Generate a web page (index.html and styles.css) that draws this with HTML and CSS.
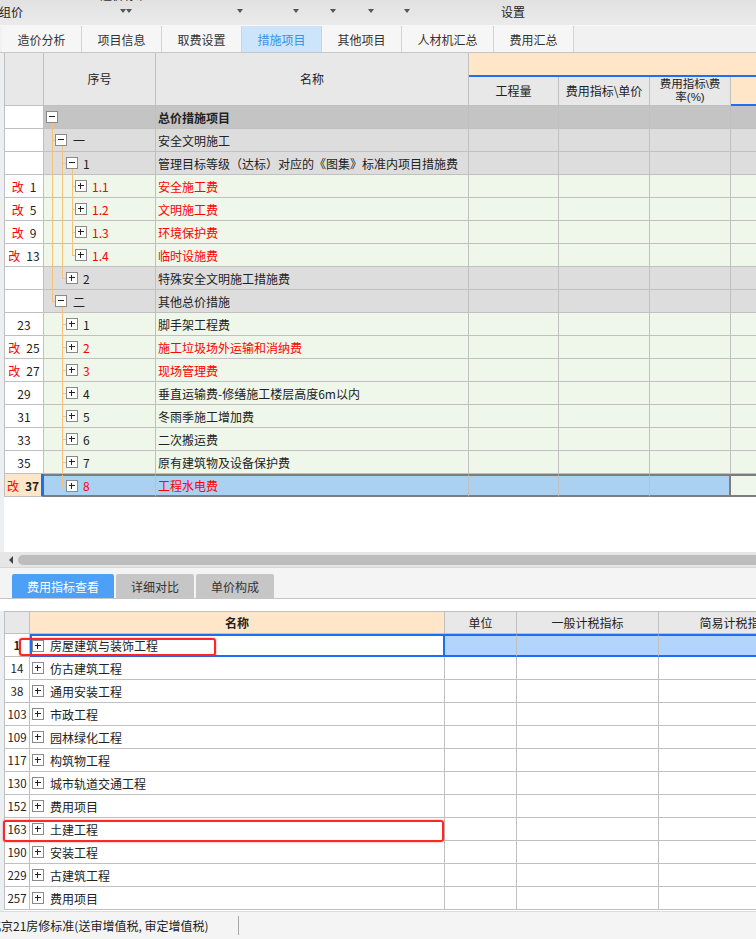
FILE: index.html
```html
<!DOCTYPE html>
<html lang="zh-CN">
<head>
<meta charset="utf-8">
<title>措施项目</title>
<link rel="stylesheet" href="styles.css">
</head>
<body>
<svg class="defs" width="0" height="0" aria-hidden="true">
  <symbol id="minus" viewBox="0 0 12 12"><rect x="0.5" y="0.5" width="11" height="11" fill="#fff" stroke="#8a8a8a"/><path d="M3 5.5h6" stroke="#222"/></symbol>
  <symbol id="plus" viewBox="0 0 12 12"><rect x="0.5" y="0.5" width="11" height="11" fill="#fff" stroke="#8a8a8a"/><path d="M3 5.5h6M5.5 3v6" stroke="#222"/></symbol>
</svg>

<div class="topbar">
  <div class="cutline"><span>造价标准</span></div>
  <div class="combos">
    <div class="combo w1"><span class="tb-text">组价</span><i class="dd"></i></div>
    <div class="combo w2"><i class="dd"></i></div>
    <div class="combo w3"><i class="dd"></i></div>
    <div class="combo w4"><i class="dd"></i></div>
    <div class="combo w5"><i class="dd"></i></div>
    <div class="combo w6"><i class="dd"></i></div>
    <div class="combo w7"><i class="dd"></i></div>
    <span class="tb-text setting">设置</span>
  </div>
</div>

<div class="tabs">
  <div class="tab">造价分析</div>
  <div class="tab">项目信息</div>
  <div class="tab">取费设置</div>
  <div class="tab active">措施项目</div>
  <div class="tab">其他项目</div>
  <div class="tab wide">人材机汇总</div>
  <div class="tab">费用汇总</div>
</div>

<div class="main">
  <div class="grid">
    <div class="ghead">
      <div class="hc h-rn"></div>
      <div class="hc h-xh">序号</div>
      <div class="hc h-mc">名称</div>
      <div class="hc h-band"></div>
      <div class="hc h-sub">工程量</div>
      <div class="hc h-sub">费用指标\单价</div>
      <div class="hc h-sub two"><span class="hl">费用指标\费</span><span class="hl">率(%)</span></div>
      <div class="hc h-last"></div>
    </div>

    <div class="row r-top">
      <div class="c rn"></div>
      <div class="c tree l0"><i class="ln x8 bot"></i><svg class="bx"><use href="#minus"/></svg></div>
      <div class="c nm b">总价措施项目</div>
      <div class="c"></div><div class="c"></div><div class="c"></div><div class="c"></div>
    </div>
    <div class="row r-gray">
      <div class="c rn"></div>
      <div class="c tree l1"><i class="ln x8 full"></i><i class="hz h8"></i><i class="ln x18 bot"></i><svg class="bx"><use href="#minus"/></svg><span>一</span></div>
      <div class="c nm">安全文明施工</div>
      <div class="c"></div><div class="c"></div><div class="c"></div><div class="c"></div>
    </div>
    <div class="row r-gray">
      <div class="c rn"></div>
      <div class="c tree l2"><i class="ln x8 full"></i><i class="ln x18 full"></i><i class="hz h18"></i><i class="ln x28 bot"></i><svg class="bx"><use href="#minus"/></svg><span>1</span></div>
      <div class="c nm">管理目标等级（达标）对应的《图集》标准内项目措施费</div>
      <div class="c"></div><div class="c"></div><div class="c"></div><div class="c"></div>
    </div>
    <div class="row r-green">
      <div class="c rn"><span class="gai">改</span><span>1</span></div>
      <div class="c tree l3"><i class="ln x8 full"></i><i class="ln x18 full"></i><i class="ln x28 full"></i><i class="hz h28"></i><svg class="bx"><use href="#plus"/></svg><span class="red">1.1</span></div>
      <div class="c nm red">安全施工费</div>
      <div class="c"></div><div class="c"></div><div class="c"></div><div class="c"></div>
    </div>
    <div class="row r-green">
      <div class="c rn"><span class="gai">改</span><span>5</span></div>
      <div class="c tree l3"><i class="ln x8 full"></i><i class="ln x18 full"></i><i class="ln x28 full"></i><i class="hz h28"></i><svg class="bx"><use href="#plus"/></svg><span class="red">1.2</span></div>
      <div class="c nm red">文明施工费</div>
      <div class="c"></div><div class="c"></div><div class="c"></div><div class="c"></div>
    </div>
    <div class="row r-green">
      <div class="c rn"><span class="gai">改</span><span>9</span></div>
      <div class="c tree l3"><i class="ln x8 full"></i><i class="ln x18 full"></i><i class="ln x28 full"></i><i class="hz h28"></i><svg class="bx"><use href="#plus"/></svg><span class="red">1.3</span></div>
      <div class="c nm red">环境保护费</div>
      <div class="c"></div><div class="c"></div><div class="c"></div><div class="c"></div>
    </div>
    <div class="row r-green">
      <div class="c rn"><span class="gai">改</span><span>13</span></div>
      <div class="c tree l3"><i class="ln x8 full"></i><i class="ln x18 full"></i><i class="ln x28 top"></i><i class="hz h28"></i><svg class="bx"><use href="#plus"/></svg><span class="red">1.4</span></div>
      <div class="c nm red">临时设施费</div>
      <div class="c"></div><div class="c"></div><div class="c"></div><div class="c"></div>
    </div>
    <div class="row r-gray">
      <div class="c rn"></div>
      <div class="c tree l2"><i class="ln x8 full"></i><i class="ln x18 top"></i><i class="hz h18"></i><svg class="bx"><use href="#plus"/></svg><span>2</span></div>
      <div class="c nm">特殊安全文明施工措施费</div>
      <div class="c"></div><div class="c"></div><div class="c"></div><div class="c"></div>
    </div>
    <div class="row r-gray">
      <div class="c rn"></div>
      <div class="c tree l1"><i class="ln x8 top"></i><i class="hz h8"></i><i class="ln x18 bot"></i><svg class="bx"><use href="#minus"/></svg><span>二</span></div>
      <div class="c nm">其他总价措施</div>
      <div class="c"></div><div class="c"></div><div class="c"></div><div class="c"></div>
    </div>
    <div class="row r-green">
      <div class="c rn"><span>23</span></div>
      <div class="c tree l2"><i class="ln x18 full"></i><i class="hz h18"></i><svg class="bx"><use href="#plus"/></svg><span>1</span></div>
      <div class="c nm">脚手架工程费</div>
      <div class="c"></div><div class="c"></div><div class="c"></div><div class="c"></div>
    </div>
    <div class="row r-green">
      <div class="c rn"><span class="gai">改</span><span>25</span></div>
      <div class="c tree l2"><i class="ln x18 full"></i><i class="hz h18"></i><svg class="bx"><use href="#plus"/></svg><span class="red">2</span></div>
      <div class="c nm red">施工垃圾场外运输和消纳费</div>
      <div class="c"></div><div class="c"></div><div class="c"></div><div class="c"></div>
    </div>
    <div class="row r-green">
      <div class="c rn"><span class="gai">改</span><span>27</span></div>
      <div class="c tree l2"><i class="ln x18 full"></i><i class="hz h18"></i><svg class="bx"><use href="#plus"/></svg><span class="red">3</span></div>
      <div class="c nm red">现场管理费</div>
      <div class="c"></div><div class="c"></div><div class="c"></div><div class="c"></div>
    </div>
    <div class="row r-green">
      <div class="c rn"><span>29</span></div>
      <div class="c tree l2"><i class="ln x18 full"></i><i class="hz h18"></i><svg class="bx"><use href="#plus"/></svg><span>4</span></div>
      <div class="c nm">垂直运输费-修缮施工楼层高度6m以内</div>
      <div class="c"></div><div class="c"></div><div class="c"></div><div class="c"></div>
    </div>
    <div class="row r-green">
      <div class="c rn"><span>31</span></div>
      <div class="c tree l2"><i class="ln x18 full"></i><i class="hz h18"></i><svg class="bx"><use href="#plus"/></svg><span>5</span></div>
      <div class="c nm">冬雨季施工增加费</div>
      <div class="c"></div><div class="c"></div><div class="c"></div><div class="c"></div>
    </div>
    <div class="row r-green">
      <div class="c rn"><span>33</span></div>
      <div class="c tree l2"><i class="ln x18 full"></i><i class="hz h18"></i><svg class="bx"><use href="#plus"/></svg><span>6</span></div>
      <div class="c nm">二次搬运费</div>
      <div class="c"></div><div class="c"></div><div class="c"></div><div class="c"></div>
    </div>
    <div class="row r-green">
      <div class="c rn"><span>35</span></div>
      <div class="c tree l2"><i class="ln x18 full"></i><i class="hz h18"></i><svg class="bx"><use href="#plus"/></svg><span>7</span></div>
      <div class="c nm">原有建筑物及设备保护费</div>
      <div class="c"></div><div class="c"></div><div class="c"></div><div class="c"></div>
    </div>
    <div class="row r-sel">
      <div class="c rn"><span class="gai">改</span><span class="b">37</span></div>
      <div class="c tree l2"><i class="ln x18 top"></i><i class="hz h18"></i><svg class="bx"><use href="#plus"/></svg><span class="red">8</span></div>
      <div class="c nm red">工程水电费</div>
      <div class="c"></div><div class="c"></div><div class="c lastsel"></div><div class="c after"></div>
    </div>
  </div>
  <div class="blank"></div>
  <div class="hscroll"><i class="larrow"></i><div class="thumb"></div></div>
</div>

<div class="subtabs">
  <div class="stab active w-a">费用指标查看</div>
  <div class="stab">详细对比</div>
  <div class="stab">单价构成</div>
</div>

<div class="lower">
  <div class="lgrid">
    <div class="lrow lhead">
      <div class="lc lrn"></div>
      <div class="lc lname b">名称</div>
      <div class="lc">单位</div>
      <div class="lc">一般计税指标</div>
      <div class="lc">简易计税指标</div>
    </div>
    <div class="lrow sel">
      <div class="lc lrn b">1</div>
      <div class="lc lname"><svg class="bx"><use href="#plus"/></svg><span>房屋建筑与装饰工程</span></div>
      <div class="lc"></div><div class="lc"></div><div class="lc"></div>
    </div>
    <div class="lrow"><div class="lc lrn">14</div><div class="lc lname"><svg class="bx"><use href="#plus"/></svg><span>仿古建筑工程</span></div><div class="lc"></div><div class="lc"></div><div class="lc"></div></div>
    <div class="lrow"><div class="lc lrn">38</div><div class="lc lname"><svg class="bx"><use href="#plus"/></svg><span>通用安装工程</span></div><div class="lc"></div><div class="lc"></div><div class="lc"></div></div>
    <div class="lrow"><div class="lc lrn">103</div><div class="lc lname"><svg class="bx"><use href="#plus"/></svg><span>市政工程</span></div><div class="lc"></div><div class="lc"></div><div class="lc"></div></div>
    <div class="lrow"><div class="lc lrn">109</div><div class="lc lname"><svg class="bx"><use href="#plus"/></svg><span>园林绿化工程</span></div><div class="lc"></div><div class="lc"></div><div class="lc"></div></div>
    <div class="lrow"><div class="lc lrn">117</div><div class="lc lname"><svg class="bx"><use href="#plus"/></svg><span>构筑物工程</span></div><div class="lc"></div><div class="lc"></div><div class="lc"></div></div>
    <div class="lrow"><div class="lc lrn">130</div><div class="lc lname"><svg class="bx"><use href="#plus"/></svg><span>城市轨道交通工程</span></div><div class="lc"></div><div class="lc"></div><div class="lc"></div></div>
    <div class="lrow"><div class="lc lrn">152</div><div class="lc lname"><svg class="bx"><use href="#plus"/></svg><span>费用项目</span></div><div class="lc"></div><div class="lc"></div><div class="lc"></div></div>
    <div class="lrow"><div class="lc lrn">163</div><div class="lc lname"><svg class="bx"><use href="#plus"/></svg><span>土建工程</span></div><div class="lc"></div><div class="lc"></div><div class="lc"></div></div>
    <div class="lrow"><div class="lc lrn">190</div><div class="lc lname"><svg class="bx"><use href="#plus"/></svg><span>安装工程</span></div><div class="lc"></div><div class="lc"></div><div class="lc"></div></div>
    <div class="lrow"><div class="lc lrn">229</div><div class="lc lname"><svg class="bx"><use href="#plus"/></svg><span>古建筑工程</span></div><div class="lc"></div><div class="lc"></div><div class="lc"></div></div>
    <div class="lrow"><div class="lc lrn">257</div><div class="lc lname"><svg class="bx"><use href="#plus"/></svg><span>费用项目</span></div><div class="lc"></div><div class="lc"></div><div class="lc"></div></div>
  </div>
  <div class="mark mark1"></div>
  <div class="mark mark2"></div>
</div>

<div class="status">
  <div class="st-text">北京21房修标准(送审增值税, 审定增值税)</div>
</div>
</body>
</html>
```

FILE: styles.css
```css
* { box-sizing: border-box; }
html, body { margin: 0; padding: 0; }
body {
  width: 756px;
  height: 939px;
  overflow: hidden;
  background: #fff;
  font-family: "Noto Sans CJK SC", "Noto Sans", sans-serif;
  font-size: 12px;
  color: #222;
}
.defs { position: absolute; width: 0; height: 0; }
.b { font-weight: bold; }
.red { color: #ff0000; }

/* top bar */
.topbar {
  height: 26px;
  background: linear-gradient(#e1e1e1, #ebebeb);
  border-bottom: 1px solid #f7f7f7;
  display: flex;
  flex-direction: column;
  overflow: hidden;
}
.cutline { height: 3px; overflow: hidden; padding-left: 100px; }
.cutline span { display: block; margin-top: -13px; line-height: 16px; color: #333; }
.combos { display: flex; align-items: flex-start; height: 22px; padding-top: 1px; }
.combo { display: flex; justify-content: space-between; align-items: flex-start; flex: none; }
.w1 { width: 127px; margin-left: -1px; }
.w2 { width: 111px; }
.w3 { width: 56px; }
.w4 { width: 37px; }
.w5 { width: 38px; }
.w6 { width: 36px; }
.w7 { width: 52px; }
.tb-text { line-height: 16px; color: #222; font-size: 12px; }
.setting { margin-left: 45px; }
.dd {
  display: block;
  width: 0; height: 0;
  margin-top: 5px;
  border-top: 4px solid #555;
  border-left: 3.5px solid transparent;
  border-right: 3.5px solid transparent;
}

/* tabs */
.tabs {
  display: flex;
  height: 27px;
  background: #f1f1f1;
  border-bottom: 1px solid #c6c6c6;
  padding-left: 2px;
}
.tab {
  width: 80px;
  background: #f6f6f6;
  border-right: 1px solid #d2d2d2;
  display: flex;
  align-items: center;
  justify-content: center;
  color: #333;
}
.tab.wide { width: 92px; }
.tab.active { background: #cce5fa; color: #3a8fe8; }

/* main grid */
.main { border-left: 4px solid #eceff2; }
.grid { border-left: 1px solid #c0c0c0; width: 752px; overflow: hidden; }
.ghead, .row {
  display: grid;
  grid-template-columns: 39px 112px 313px 90px 91px 81px 60px;
  width: 786px;
}
.ghead { grid-template-rows: 24px 29px; }
.hc {
  background: #e8e8e8;
  border-right: 1px solid #c0c0c0;
  border-bottom: 1px solid #c0c0c0;
  display: flex;
  align-items: center;
  justify-content: center;
  text-align: center;
  line-height: 14px;
  color: #222;
}
.h-rn, .h-xh, .h-mc { grid-row: 1 / 3; }
.h-band { grid-column: 4 / 8; background: #ffe6c8; border-right: 0; border-bottom: 2px solid #1f6fef; }
.h-sub { grid-row: 2; }
.h-sub.two {
  flex-direction: column;
  font-family: "Liberation Sans", "Noto Sans CJK SC", sans-serif;
  font-size: 11.5px;
}
.hl { display: block; line-height: 13.5px; height: 13.5px; }
.h-last { grid-row: 2; background: #ffe6c8; border-right: 0; border-bottom: 2px solid #1f6fef; }

.row { height: 23px; }
.c {
  height: 23px;
  border-right: 1px solid #c0c0c0;
  border-bottom: 1px solid #c0c0c0;
  display: flex;
  align-items: center;
  white-space: nowrap;
  overflow: hidden;
}
.r-top .c { background: #c4c4c4; }
.r-gray .c { background: #dddddd; }
.r-green .c { background: #eef7e9; }
.r-sel .c { background: #aad1f1; border-top: 2px solid #7d7d7d; border-bottom: 2px solid #7d7d7d; }
.row .c.rn {
  background: #fff;
  justify-content: center;
  gap: 6px;
  border-top: 0;
  border-bottom: 1px solid #c0c0c0;
}
.r-sel .c.rn { background: #ffe6c8; border-right: 3px solid #1a6ff2; }
.r-sel .c.lastsel { border-right: 2px solid #7d7d7d; }
.r-sel .c.after { background: #eef7e9; }
.gai { color: #ff0000; }
.nm { padding-left: 2px; }

.tree { position: relative; gap: 5px; overflow: visible; }
.l0 { padding-left: 2px; }
.l1 { padding-left: 11px; gap: 6px; }
.l2 { padding-left: 22px; }
.l3 { padding-left: 31px; }
.bx { width: 12px; height: 12px; flex: none; position: relative; z-index: 1; }
.ln { position: absolute; width: 1px; background: #f5c27c; }
.x8 { left: 8px; }
.x18 { left: 18px; }
.x28 { left: 28px; }
.full { top: -1px; bottom: -1px; }
.top { top: -1px; height: 12px; }
.bot { top: 11px; bottom: -1px; }
.hz { position: absolute; top: 11px; height: 1px; background: #f5c27c; }
.h8 { left: 8px; width: 4px; }
.h18 { left: 18px; width: 5px; }
.h28 { left: 28px; width: 4px; }

.blank { height: 55px; }
.hscroll {
  height: 15px;
  background: #e6e6e6;
  display: flex;
  align-items: center;
  padding-left: 9px;
  margin-left: -4px;
}
.larrow {
  display: block;
  width: 0; height: 0;
  border-right: 4px solid #444;
  border-top: 4px solid transparent;
  border-bottom: 4px solid transparent;
}
.thumb {
  flex: 1;
  height: 10px;
  margin-left: 5px;
  background: #bdbdbd;
  border-radius: 5px 0 0 5px;
}

/* sub tabs */
.subtabs {
  height: 32px;
  background: #f4f4f4;
  border-top: 1px solid #d6d6d6;
  border-bottom: 1px solid #c6c6c6;
  display: flex;
  align-items: flex-end;
  padding-left: 12px;
  gap: 2px;
  margin-bottom: 12px;
}
.stab {
  width: 78px;
  height: 24px;
  background: #c6c6c6;
  color: #333;
  display: flex;
  align-items: center;
  justify-content: center;
  border-radius: 2px 2px 0 0;
}
.stab.w-a { width: 102px; }
.stab.active { background: #4ca0f8; color: #fff; }

/* lower grid */
.lower { position: relative; height: 300px; border-left: 4px solid #eceff2; }
.lgrid { border-left: 1px solid #c0c0c0; border-top: 1px solid #c0c0c0; width: 752px; overflow: hidden; }
.lrow {
  display: grid;
  grid-template-columns: 25px 415px 72px 142px 154px;
  width: 808px;
}
.lc {
  height: 23px;
  border-right: 1px solid #c0c0c0;
  border-bottom: 1px solid #c0c0c0;
  display: flex;
  align-items: center;
  justify-content: center;
  white-space: nowrap;
  overflow: hidden;
  background: #fff;
}
.lhead .lc { height: 22px; background: #e8e8e8; }
.lhead .lc.lname { background: #ffe6c8; justify-content: center; padding-left: 0; }
.lrn { font-size: 11.5px; }
.lname { justify-content: flex-start; padding-left: 2px; gap: 6px; }
.sel .lc { background: #b4d5fb; border-top: 2px solid #1a6ff2; border-bottom: 2px solid #1a6ff2; }
.sel .lc.lrn { background: #fff; border-top: 0; border-bottom: 1px solid #c0c0c0; }
.sel .lc.lname { background: #fff; border-left: 2px solid #1a6ff2; border-right: 2px solid #1a6ff2; padding-left: 0; }

.mark {
  position: absolute;
  border: 2px solid #ff2626;
  border-radius: 3px;
  box-shadow: 0 0 2px rgba(255, 0, 0, 0.55);
}
.mark1 { left: 15px; top: 27px; width: 197px; height: 18px; }
.mark2 { left: -1px; top: 209px; width: 441px; height: 22px; }

/* status */
.status {
  height: 28px;
  background: #f4f4f4;
  border-top: 1px solid #dcdcdc;
  display: flex;
  align-items: center;
  overflow: hidden;
}
.st-text {
  flex: none;
  margin-left: -11px;
  width: 250px;
  height: 19px;
  line-height: 19px;
  border-right: 1px solid #a8a8a8;
  white-space: nowrap;
  color: #222;
}
```
